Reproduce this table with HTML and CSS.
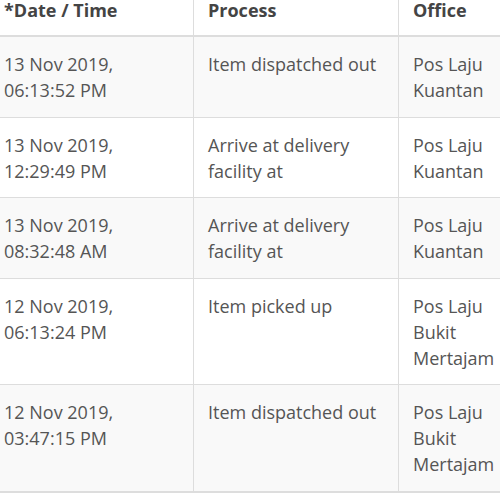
FILE: index.html
```html
<!DOCTYPE html>
<html>
<head>
<meta charset="utf-8">
<link rel="stylesheet" href="styles.css">
</head>
<body>
<div class="wrap">
<table class="track">
<thead>
<tr><th class="c1">*Date / Time</th><th class="c2">Process</th><th class="c3">Office</th></tr>
</thead>
<tbody>
<tr><td>13 Nov 2019,<br>06:13:52 PM</td><td>Item dispatched out</td><td>Pos Laju<br>Kuantan</td></tr>
<tr><td>13 Nov 2019,<br>12:29:49 PM</td><td>Arrive at delivery<br>facility at</td><td>Pos Laju<br>Kuantan</td></tr>
<tr><td>13 Nov 2019,<br>08:32:48 AM</td><td>Arrive at delivery<br>facility at</td><td>Pos Laju<br>Kuantan</td></tr>
<tr><td>12 Nov 2019,<br>06:13:24 PM</td><td>Item picked up</td><td>Pos Laju<br>Bukit<br>Mertajam</td></tr>
<tr><td>12 Nov 2019,<br>03:47:15 PM</td><td>Item dispatched out</td><td>Pos Laju<br>Bukit<br>Mertajam</td></tr>
</tbody>
</table>
</div>
</body>
</html>
```
FILE: styles.css
```css
html, body {
  margin: 0;
  padding: 0;
  background: #fff;
  overflow: hidden;
}
.wrap {
  width: 500px;
  height: 495px;
  overflow: hidden;
}
.track {
  border-collapse: collapse;
  margin-top: -17px;
  margin-left: -10px;
  font-family: "Open Sans", "Noto Sans", sans-serif;
  font-size: 18px;
  line-height: 26px;
  color: #555;
  table-layout: fixed;
  width: 620px;
}
.track th, .track td {
  text-align: left;
  vertical-align: top;
  padding: 14px 14px 13.5px 14px;
  border-top: 1px solid #ddd;
  border-left: 1px solid #ddd;
}
.track th {
  font-weight: 700;
  color: #444;
  border-top: none;
  border-bottom: 2px solid #ddd;
  padding-bottom: 12px;
}
.track th:first-child, .track td:first-child {
  border-left: none;
}
.track .c1 { width: 175px; }
.track .c2 { width: 176px; }
.track .c3 { width: 190px; }
.track tbody tr:nth-child(odd) td {
  background: #f9f9f9;
}
.track tbody tr:last-child td {
  border-bottom: 2px solid #ddd;
}
```
